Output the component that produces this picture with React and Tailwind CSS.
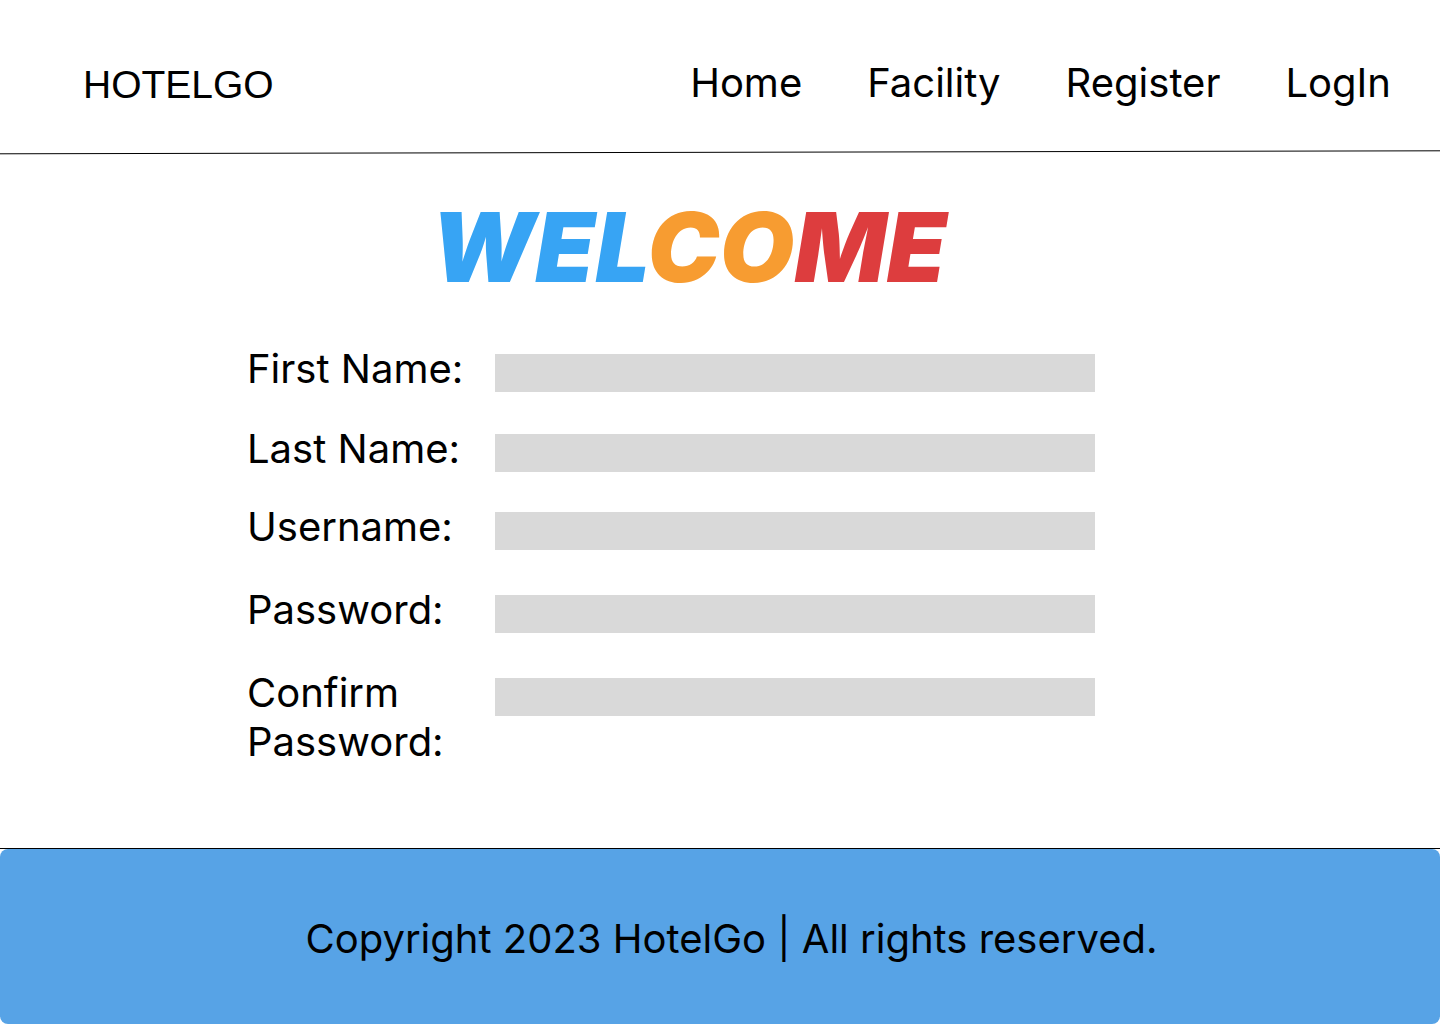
import React from "react";

const rows = [
  { label: "First Name:", mt: "mt-[39px]" },
  { label: "Last Name:", mt: "mt-[31px]" },
  { label: "Username:", mt: "mt-[29px]" },
  { label: "Password:", mt: "mt-[34px]" },
  { label: "Confirm Password:", mt: "mt-[34px]", wrap: true },
];

export default function App() {
  return (
    <div className="w-[1440px] h-[1024px] flex flex-col bg-white text-black font-['Inter',sans-serif]">
      <header className="h-[150px] pt-[16px] flex items-center justify-between pl-[83px] pr-[49px]">
        <div className="mt-[3px] font-['Liberation_Sans',Arial,sans-serif] text-[39px] leading-[46px]">HOTELGO</div>
        <nav className="flex items-center gap-[65px] text-[40px] leading-[48px]">
          <span>Home</span>
          <span>Facility</span>
          <span>Register</span>
          <span>LogIn</span>
        </nav>
      </header>
      <svg className="block w-[1440px] h-[5px]" viewBox="0 0 1440 5" preserveAspectRatio="none">
        <line x1="0" y1="3.8" x2="1440" y2="0.8" stroke="#000" strokeWidth="1" />
      </svg>
      <main className="flex-1 flex flex-col">
        <div className="mt-[34px] pr-[62px] text-center text-[96px] leading-[116px] font-black italic tracking-[0.4px]">
          <span className="text-[#37A4F4]">WEL</span>
          <span className="text-[#F79C31]">CO</span>
          <span className="text-[#DD3D3E]">ME</span>
        </div>
        <div className="flex flex-col pl-[247px]">
          {rows.map((r) => (
            <div key={r.label} className={`flex items-start ${r.mt}`}>
              <div className="w-[248px] text-[40px] leading-[49px]">
                {r.wrap ? (
                  <>
                    Confirm
                    <br />
                    Password:
                  </>
                ) : (
                  r.label
                )}
              </div>
              <div className="mt-[10px] w-[600px] h-[38px] bg-[#D9D9D9]" />
            </div>
          ))}
        </div>
      </main>
      <footer className="border-t border-black">
        <div className="h-[175px] bg-[#57A3E6] rounded-[8px] flex items-center justify-center pl-[23px] pt-[4px]">
          <p className="text-[40px] leading-[48px]">Copyright 2023 HotelGo | All rights reserved.</p>
        </div>
      </footer>
    </div>
  );
}
